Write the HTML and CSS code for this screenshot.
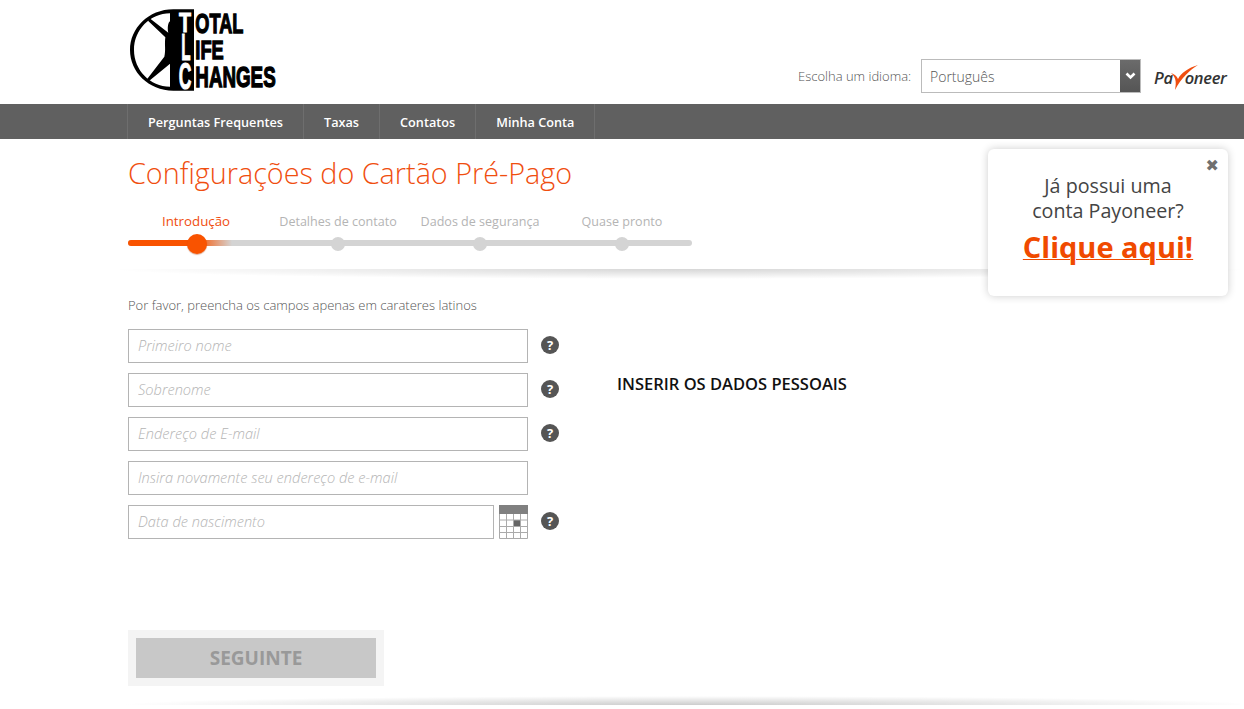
FILE: index.html
```html
<!DOCTYPE html>
<html lang="pt">
<head>
<meta charset="utf-8">
<title>Configurações do Cartão Pré-Pago</title>
<link rel="stylesheet" href="styles.css">
</head>
<body>
<header class="wrap header">
  <svg class="logo" viewBox="24 0 456 300" aria-label="Total Life Changes">
    <path fill-rule="evenodd" d="M222 28H160C85 28 30 85 30 150C30 215 85 272 160 272H222ZM150 40V260C90 260 42 210 42 150C42 90 90 40 150 40Z"/>
    <path d="M152 62C143 66 142 85 145 98L89 55L84 62L136 112C133 135 138 150 133 170L81 238L87 243L152 190Z"/>
    <text class="logo-letter logo-t" x="177" y="95" textLength="36" lengthAdjust="spacingAndGlyphs">T</text>
    <text class="logo-letter" x="184" y="180" textLength="28" lengthAdjust="spacingAndGlyphs">L</text>
    <text class="logo-letter" x="176" y="266" textLength="38" lengthAdjust="spacingAndGlyphs">C</text>
    <text class="logo-word logo-total" x="226" y="98" textLength="144" lengthAdjust="spacingAndGlyphs">OTAL</text>
    <text class="logo-word logo-life" x="226" y="178" textLength="85" lengthAdjust="spacingAndGlyphs">IFE</text>
    <text class="logo-word logo-changes" x="226" y="260" textLength="241" lengthAdjust="spacingAndGlyphs">HANGES</text>
  </svg>
  <div class="header-right">
    <span class="lang-label">Escolha um idioma:</span>
    <div class="lang-select">
      <span class="lang-value">Português</span>
      <span class="lang-arrow">
        <svg width="11" height="8" viewBox="0 0 11 8"><path d="M1.500 1.500L5.500 5.500L9.500 1.500" fill="none" stroke="#fff" stroke-width="2.600"/></svg>
      </span>
    </div>
    <div class="payoneer">
      <span class="pay-text">Pa</span><span class="pay-text pay-end">oneer</span>
      <svg class="pay-y" width="30" height="26" viewBox="0 0 30 26"><path d="M1 9C4 10 7 12 8 15C11 9 18 4 28 1C20 6 11 14 5 26C6 20 7 14 1 9Z"/></svg>
    </div>
  </div>
</header>

<nav class="nav">
  <div class="wrap nav-list">
    <a class="nav-item">Perguntas Frequentes</a>
    <a class="nav-item">Taxas</a>
    <a class="nav-item">Contatos</a>
    <a class="nav-item">Minha Conta</a>
  </div>
</nav>

<main class="wrap main">
  <h1 class="title">Configurações do Cartão Pré-Pago</h1>
  <div class="steps">
    <div class="track"><div class="track-fill"></div></div>
    <div class="step step-active"><span class="step-label">Introdução</span><span class="step-dot"></span></div>
    <div class="step"><span class="step-label">Detalhes de contato</span><span class="step-dot"></span></div>
    <div class="step"><span class="step-label">Dados de segurança</span><span class="step-dot"></span></div>
    <div class="step"><span class="step-label">Quase pronto</span><span class="step-dot"></span></div>
  </div>
  <div class="shade shade-top"></div>

  <p class="intro">Por favor, preencha os campos apenas em carateres latinos</p>

  <div class="form-area">
    <form class="fields">
      <div class="field"><input class="input" placeholder="Primeiro nome"><span class="help">?</span></div>
      <div class="field"><input class="input" placeholder="Sobrenome"><span class="help">?</span></div>
      <div class="field"><input class="input" placeholder="Endereço de E-mail"><span class="help">?</span></div>
      <div class="field"><input class="input" placeholder="Insira novamente seu endereço de e-mail"></div>
      <div class="field">
        <input class="input input-date" placeholder="Data de nascimento">
        <svg class="calendar" width="29" height="34" viewBox="0 0 29 34">
          <rect x="0" y="0" width="29" height="9" fill="#808080"/>
          <rect x="14.500" y="15" width="7" height="7" fill="#666"/>
          <path d="M.5 9V33.500H28.500V9M.5 15H28.500M.5 21.500H28.500M.5 27.500H28.500M7.500 9V34M14.500 9V34M21.500 9V34" fill="none" stroke="#aaa"/>
        </svg>
        <span class="help">?</span>
      </div>
    </form>
    <p class="side-note">INSERIR OS DADOS PESSOAIS</p>
  </div>

  <div class="submit-box"><button class="submit" type="button">SEGUINTE</button></div>
  <div class="shade shade-bottom"></div>
</main>

<aside class="popup">
  <span class="popup-close">✖</span>
  <p class="popup-text">Já possui uma<br>conta Payoneer?</p>
  <a class="popup-link">Clique aqui!</a>
</aside>
</body>
</html>
```
FILE: styles.css
```css
* { box-sizing: border-box; }
html, body { margin: 0; padding: 0; height: 709px; overflow: hidden; }
body { background: #fff; font-family: "Open Sans", sans-serif; color: #555; position: relative; }
.wrap { width: 988px; margin: 0 auto; }

.header { height: 104px; display: flex; justify-content: space-between; align-items: flex-start; }
.logo { width: 152px; height: 100px; display: block; }
.logo-letter { fill: #fff; stroke: #fff; stroke-width: 3px; font-family: "Liberation Sans", sans-serif; font-weight: 700; font-size: 108px; }
.logo-t { font-size: 82px; }
.logo-word { fill: #000; stroke: #000; stroke-width: 4px; font-family: "Liberation Sans", sans-serif; font-weight: 700; }
.logo-total { font-size: 84px; }
.logo-life { font-size: 80px; }
.logo-changes { font-size: 90px; }

.header-right { display: flex; align-items: center; margin-top: 59px; margin-right: -110px; }
.lang-label { font-size: 13px; font-weight: 300; color: #555; width: 123px; white-space: nowrap; }
.lang-select { width: 220px; height: 34px; border: 1px solid #bbb; display: flex; justify-content: space-between; }
.lang-value { font-size: 14px; font-weight: 300; color: #555; line-height: 33px; padding-left: 8px; }
.lang-arrow { width: 20px; background: linear-gradient(#6b6b6b, #555); display: flex; align-items: center; justify-content: center; }
.payoneer { width: 72px; height: 26px; margin-left: 13px; display: flex; align-items: center; position: relative; }
.pay-text { font-size: 16.500px; font-weight: 600; font-style: italic; color: #333; line-height: 26px; margin-top: 3px; letter-spacing: -.3px; }
.pay-end { margin-left: 12px; }
.pay-y { position: absolute; left: 16px; top: 1px; fill: #f04e0f; }

.nav { height: 35px; background: #606060; }
.nav-list { display: flex; height: 35px; border-left: 1px solid #6e6e6e; width: 989px; position: relative; left: -.5px; }
.nav-item { padding: 0 20px; border-right: 1px solid #6e6e6e; color: #fff; font-size: 12.700px; font-weight: 600; line-height: 36px; white-space: nowrap; }

.main { position: relative; }
.title { margin: 16px 0 0; font-size: 28.750px; font-weight: 300; line-height: 36px; color: #f04e0f; }

.steps { display: grid; grid-template-columns: repeat(4, 142px); margin: 22px 0 0 -3px; width: 570px; position: relative; height: 43px; }
.track { position: absolute; left: 3px; top: 27px; width: 564px; height: 6px; border-radius: 3px; background: #d4d4d4; overflow: hidden; }
.track-fill { width: 104px; height: 100%; background: linear-gradient(90deg, #f95300 0, #f95300 66%, rgba(249,83,0,0) 100%); }
.step { display: flex; flex-direction: column; align-items: center; position: relative; }
.step-label { font-size: 12.550px; line-height: 18px; color: #b4b4b4; white-space: nowrap; font-weight: 400; }
.step-active .step-label { color: #f04e0f; font-size: 13.300px; line-height: 17px; margin-bottom: 1px; }
.step-dot { width: 14px; height: 14px; border-radius: 50%; background: #d4d4d4; margin-top: 6px; }
.step-active .step-dot { width: 20px; height: 20px; background: #f95300; margin: 3px 0 0 2px; box-shadow: 0 1px 1px rgba(180,60,0,.4); }

.shade { height: 10px; position: relative; }
.shade-top { margin: 13px -124px 0 -8px; background: radial-gradient(ellipse 570px 10px at 560px 0, rgba(0,0,0,.16), rgba(0,0,0,0)); }
.shade-bottom { margin: 9px -124px 0 -8px; background: radial-gradient(ellipse 570px 9px at 570px 100%, rgba(0,0,0,.2), rgba(0,0,0,0)); }

.intro { margin: 16px 0 0; font-size: 13px; font-weight: 300; line-height: 20px; color: #555; }

.form-area { display: flex; margin-top: 14px; height: 301px; }
.fields { width: 489px; display: flex; flex-direction: column; gap: 10px; }
.field { display: flex; align-items: center; height: 34px; }
.input { width: 400px; height: 34px; border: 1px solid #b4b4b4; padding: 0 9px 2px; font: italic 300 14.600px "Open Sans", sans-serif; color: #555; background: #fff; outline: none; }
.input::placeholder { color: #b4b4b4; opacity: 1; }
.input-date { width: 366px; }
.calendar { margin-left: 5px; flex: none; }
.help { margin: 0 0 2px 13px; width: 18px; height: 18px; border-radius: 50%; background: #555; color: #fff; font-size: 13px; font-weight: 700; line-height: 18px; text-align: center; flex: none; }
.side-note { margin: 44px 0 0; font-size: 16.500px; font-weight: 600; line-height: 22px; color: #111; white-space: nowrap; }

.submit-box { width: 256px; height: 56px; padding: 8px; background: #f4f4f4; }
.submit { display: block; width: 100%; height: 40px; border: 0; padding: 0; background: #c8c8c8; color: #999; font: 700 19px "Open Sans", sans-serif; }

.popup { position: absolute; left: 988px; top: 149px; width: 240px; height: 147px; background: #fff; border-radius: 6px; box-shadow: 0 0 8px rgba(0,0,0,.2); text-align: center; padding-top: 24px; }
.popup-close { position: absolute; right: 9px; top: 6px; font-size: 16px; line-height: 22px; color: #707070; font-family: "DejaVu Sans", sans-serif; }
.popup-text { margin: 0; font-size: 19.700px; line-height: 25px; color: #444; }
.popup-link { display: inline-block; margin-top: 5px; font-size: 29px; font-weight: 700; line-height: 38px; color: #f04a00; text-decoration: underline; text-decoration-thickness: 1px; }
```
